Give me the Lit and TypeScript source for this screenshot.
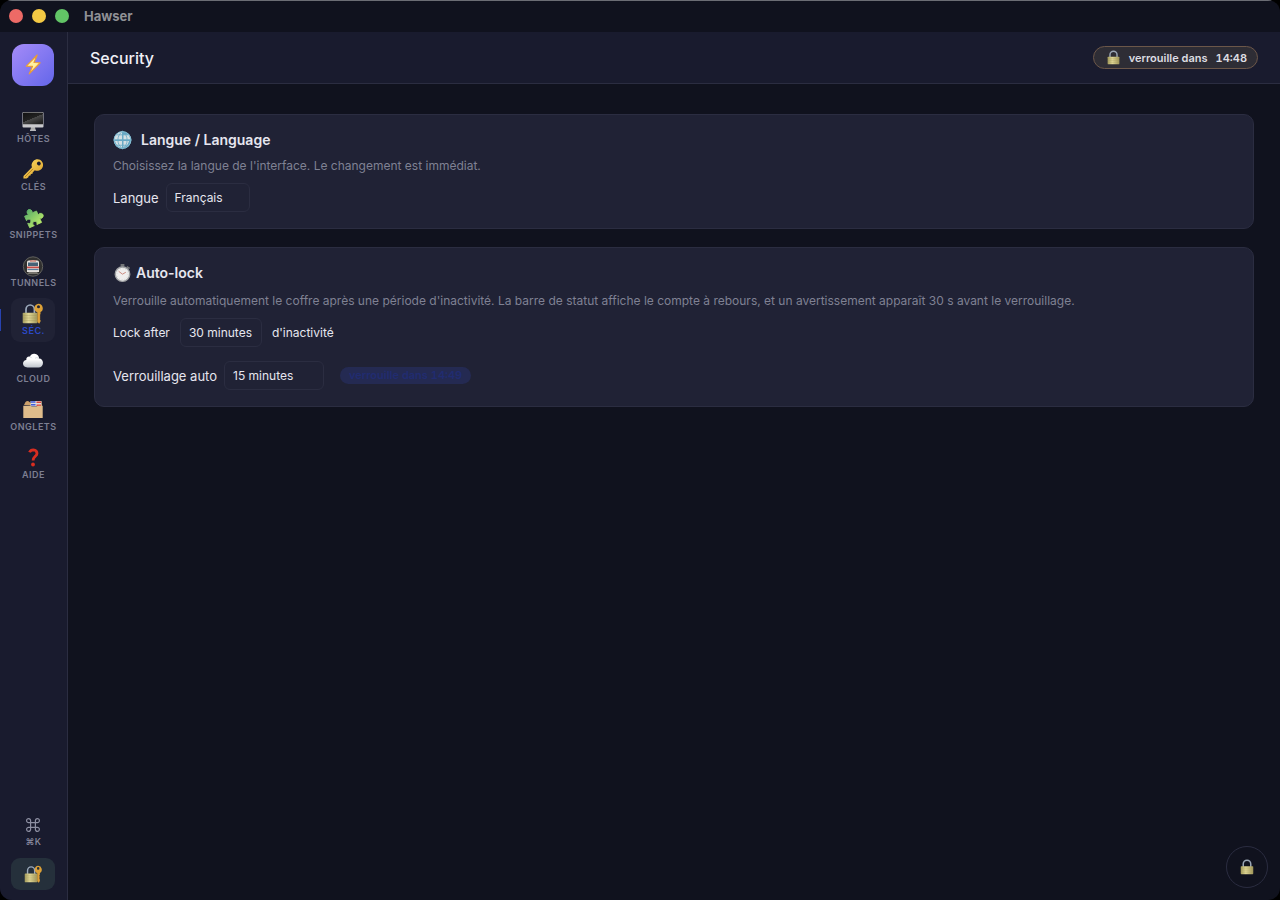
import { LitElement, html, svg, css, type TemplateResult } from "lit";
import { customElement, property } from "lit/decorators.js";

const brass = svg`<defs><linearGradient id="brass">
  <stop offset="0" stop-color="#a49c5c"/><stop offset=".4" stop-color="#e0d795"/><stop offset="1" stop-color="#a0965a"/>
</linearGradient></defs>`;

const art: Record<string, TemplateResult> = {
  bolt: svg`<path d="M13.500 0 3.100 10.600l6 .2L5.900 18 16.300 7.400l-5.800-.3z" fill="#fff0a0" stroke="#e99b35" stroke-width="1.1" stroke-linejoin="round"/>`,
  hosts: svg`
    <defs><linearGradient id="scr" x2=".7" y2="1"><stop offset="0" stop-color="#111"/><stop offset=".55" stop-color="#222"/><stop offset=".56" stop-color="#4a4a4a"/><stop offset="1" stop-color="#222"/></linearGradient></defs>
    <path d="M8 15h4l.6 3H7.400z" fill="#aaa"/><rect x="-.5" y="0" width="21" height="15.600" rx="1" fill="#c9c9cc"/>
    <rect x="0" y=".5" width="20" height="11.800" rx=".4" fill="url(#scr)"/><path d="M7 18.300h6" stroke="#ddd"/>`,
  key: svg`
    <defs><linearGradient id="gold" x2="1" y2="1"><stop offset="0" stop-color="#ffe06a"/><stop offset="1" stop-color="#d79a23"/></linearGradient></defs>
    <path fill-rule="evenodd" fill="url(#gold)" d="M10.200 1.200C13-1.800 17-1.200 18.900 1.400s1.500 6-1 8c-1.800 1.500-4.300 1.700-6.100.8L9.700 12.400l-.2 1.400-1.600.1-.4 1.700-1.700.1-.4 1.600-1.800 1.200-3.200.1L.5 16l8.500-8.700c-.9-2-.4-4.400 1.200-6.100zM17.300 2.300a1.900 1.900 0 1 0-2.900 2.500 1.900 1.900 0 0 0 2.900-2.500z"/>
    <path d="m2 17 8-8.200" stroke="#a66d17" stroke-width=".8"/>`,
  puzzle: svg`
    <defs><linearGradient id="pz" x1=".3" x2=".7" y2="1"><stop offset="0" stop-color="#5dae68"/><stop offset="1" stop-color="#b5e86a"/></linearGradient></defs>
    <path transform="rotate(-24 10 10)" fill="url(#pz)" stroke="url(#pz)" stroke-width=".8" stroke-linejoin="round"
      d="M3 5H7.700A2.500 2.500 0 1 1 10.900 5H16V9.500A2.500 2.500 0 1 1 16 12.700V17.500H10.900A2.200 2.200 0 1 0 8.100 17.500H3V12.700A2.200 2.200 0 1 0 3 9.900z"/>`,
  metro: svg`
    <circle cx="10" cy="10.500" r="9.700" fill="#30302f" stroke="#60605d" stroke-width="1"/>
    <path d="M4 16V5.500Q5 4 10 4t6 1.500V16z" fill="#e4e0dc"/><path d="M5 6.500h10v3.500H5z" fill="#456277"/>
    <path d="M7 5h6" stroke="#b54" stroke-width="1"/><path d="M4 11.400h12" stroke="#c44b46" stroke-width="1.700"/>
    <path d="M4.500 13.500h11" stroke="#547b9b" stroke-width="1.200"/><path d="m4 18 2-2h8l2 2z" fill="#77756e"/>`,
  lockkey: svg`${brass}
    <path d="M3 9.500V5.500a4.200 4.500 0 0 1 8.400 0v4" fill="none" stroke="#9ba9bb" stroke-width="1.700"/>
    <rect x="-.3" y="8.700" width="14.800" height="10.500" rx=".8" fill="url(#brass)"/><path d="M0 11.500h14.500M0 14h14.500M0 16.500h14.500" stroke="#9c9155" stroke-width=".5" opacity=".6"/>
    <path fill-rule="evenodd" d="M15.500-.3a4.500 4.500 0 0 1 2 8.400v2.100l-.8.800.8 1-.8 1 .8 1-.8 1 .8 1v1.500L16.200 19.700l-1.800-1.700V8.400A4.500 4.500 0 0 1 15.500-.3zm0 1.600a1.500 1.500 0 1 0 0 3 1.500 1.500 0 0 0 0-3z" fill="#dda137"/>`,
  lock: svg`${brass}
    <path d="M5.300 10V6.300a4.700 4.700 0 0 1 9.400 0V10" fill="none" stroke="#9aa6b5" stroke-width="1.900"/>
    <rect x="2.200" y="9" width="15.600" height="10" rx=".8" fill="url(#brass)"/>
    <path d="M2.200 11.500h15.600M2.200 14h15.600M2.200 16.500h15.600" stroke="#9c9155" stroke-width=".5" opacity=".6"/>`,
  cloud: svg`
    <defs><linearGradient id="cl" x2="0" y2="1"><stop offset=".4" stop-color="#fff"/><stop offset="1" stop-color="#bfc5cd"/></linearGradient></defs>
    <path fill="url(#cl)" d="M4.500 15.500C1.500 15.500 0 13.700 0 11.600 0 9.500 1.600 8.100 3.300 8c-.3-2.200 1.500-3.800 3.500-3.300C7.700 2.700 9.300 1.500 11.500 1.700c2.800.2 4.600 2.300 4.600 4.700 2.200 0 3.900 1.900 3.900 4.400 0 2.900-2 4.700-4.500 4.700z"/><path d="M6.800 4.700q1.400.2 2 1.500m3.200.1q1.500-1.500 4.100.1" fill="none" stroke="#d3d9e0" stroke-width=".8"/>`,
  tabs: svg`
    <path d="M1 5 2.500 2q2-2 4 0L8 3.500 18.500 1l.5 5z" fill="#cda06b"/><path d="M7.500 1h10.800v5.500H7.500z" fill="#ddd"/>
    <path d="M8 2h4.500M8 4.800h4.500" stroke="#425bdb" stroke-width="1.500"/><path d="M13.500 2.200h4.500m-4.500 3h4.500" stroke="#dc443b" stroke-width="1.500"/>
    <path d="M.3 5.800h7.400l1 1h5l1-1h5V18H.3z" fill="#dfbc8b"/>`,
  question: svg`<path d="M6.500 4.300Q7.600 1.800 10.300 1.800q3.700.2 3.700 3.600c0 2.800-3.900 3.100-3.900 7" fill="none" stroke="#d92d20" stroke-width="2.800"/><circle cx="10" cy="16.500" r="1.900" fill="#d92d20"/>`,
  command: svg`<path d="M7 7h6v6H7zM7 7H4.700A2.500 2.500 0 1 1 7 4.700zm6 0V4.700A2.500 2.500 0 1 1 15.300 7zm0 6h2.300a2.500 2.500 0 1 1-2.300 2.300zm-6 0v2.300A2.500 2.500 0 1 1 4.700 13z" fill="none" stroke="currentColor" stroke-width="1.500"/>`,
  globe: svg`
    <circle cx="10" cy="9.500" r="9.300" fill="#62a5c2"/>
    <path d="M2.500 5Q5 1 9.500.5V9H1zM2 10.500h7.500V18Q4 17 2 10.500zM11 4h5.500l2 5H11zm0 6.500h6L15 15l-4 2.500z" fill="#d3dfe3"/>
    <path d="M10 .2v18.600M.7 9.500h18.600M3 4h14M3 15h14M10 .2C3.500 5 3.500 14 10 18.800M10 .2c6.500 4.800 6.500 13.800 0 18.600" fill="none" stroke="#6aaac6" stroke-width=".9"/>
    <circle cx="10" cy="9.500" r="8.900" fill="none" stroke="#8cc4d8" stroke-width=".9"/>`,
  timer: svg`
    <path d="M8 0h4v3H8zm7 2 3 2-1 1.500-3-2z" fill="#727477"/><circle cx="10" cy="10.700" r="7.600" fill="#efeeed" stroke="#a1a3a5" stroke-width="1.500"/>
    <circle cx="10" cy="10.700" r="5.800" fill="none" stroke="#bbb" stroke-width=".8" stroke-dasharray=".6 2.400"/><path d="m6 7.700 4 3 3.500-2" fill="none" stroke="#c4796d" stroke-width=".9"/>`,
};

@customElement("app-icon")
export class AppIcon extends LitElement {
  @property() name = "";
  @property({ type: Number }) size = 20;
  static styles = css`:host { display: inline-flex; flex: none; } svg { display: block; overflow: visible; }`;
  render() {
    return html`<svg viewBox="0 0 20 20" width=${this.size} height=${this.size} aria-hidden="true">${art[this.name]}</svg>`;
  }
}

const nav = [
  ["hosts", "HÔTES"], ["key", "CLÉS"], ["puzzle", "SNIPPETS"], ["metro", "TUNNELS"],
  ["lockkey", "SÉC."], ["cloud", "CLOUD"], ["tabs", "ONGLETS"], ["question", "AIDE"],
];

@customElement("app-root")
export class AppRoot extends LitElement {
  static styles = css`
    :host { display: block; min-height: 100vh; background: #000; color: #e6e6ef; font: 13px/20px Inter, "Noto Sans", sans-serif; }
    * { box-sizing: border-box; }
    button, select { font: inherit; color: inherit; margin: 0; }
    button { border: 0; background: none; padding: 0; cursor: pointer; }
    h1, h2, p { margin: 0; }
    .window { min-height: 100vh; display: flex; flex-direction: column; background: #10121e; border-radius: 12px; overflow: hidden; }
    .titlebar { height: 32px; display: flex; align-items: center; gap: 9px; padding: 0 9px 1px; border-top: 1px solid #6b6d74; }
    .dot { width: 14px; height: 14px; border-radius: 50%; }
    .red { background: #ed6a66; } .yellow { background: #f4c944; } .green { background: #62c466; }
    .app-name { margin-left: 6px; font-weight: 700; color: #8f9095; }
    .body { flex: 1; display: flex; }
    .sidebar { width: 68px; flex: none; display: flex; flex-direction: column; align-items: center; padding: 12px 0 10px; background: #191b2e; border-right: 1px solid #2b2d41; }
    .sidebar { padding-right: 1px; }
    .logo { width: 42px; height: 42px; display: grid; place-items: center; border-radius: 12px; background: linear-gradient(135deg, #a58bf8, #6366ea); }
    .nav { width: 100%; display: flex; flex-direction: column; align-items: center; gap: 4px; margin-top: 20px; flex: 1; }
    .item { width: 44px; height: 44px; display: flex; flex-direction: column; align-items: center; justify-content: center; gap: 1px; border-radius: 9px; color: #7d7f92; position: relative; }
    .item span { padding-left: 1px; font-size: 9px; line-height: 12px; letter-spacing: 0.5px; font-weight: 600; white-space: nowrap; }
    .item.active { background: #202235; color: #2b49c8; }
    .item.active::before { content: ""; position: absolute; left: -11px; top: 11px; width: 1px; height: 22px; background: #2742b0; }
    .item.shortcut { color: #8d8fa2; gap: 3px; }
    .item.shortcut span { font-weight: 500; }
    .vault { width: 44px; height: 32px; display: grid; place-items: center; border-radius: 9px; background: #25303b; margin-top: 4px; }
    .main { flex: 1; min-width: 0; display: flex; flex-direction: column; }
    .header { height: 52px; display: flex; align-items: center; justify-content: space-between; padding: 0 22px; background: #191b2e; border-bottom: 1px solid #2b2d41; }
    h1 { font-size: 16px; font-weight: 500; color: #f0f0f6; }
    .countdown { height: 23px; display: flex; align-items: center; gap: 8px; padding: 0 10px 0 12px; border: 1px solid #6c5749; border-radius: 12px; background: #2e2d35; font-size: 11px; font-weight: 600; font-variant-numeric: tabular-nums; color: #dddde2; }
    .content { padding: 30px 26px; display: flex; flex-direction: column; gap: 18px; }
    .card { padding: 15px 18px 16px; border: 1px solid #2b2d41; border-radius: 10px; background: #202235; }
    h2 { display: flex; align-items: center; gap: 9px; font-size: 14px; font-weight: 600; }
    h2.tight { gap: 4px; }
    .hint { font-size: 12px; line-height: 18px; color: #7f8193; margin-top: 7px; }
    .tight + .hint { margin-top: 9px; }
    .row { display: flex; align-items: center; gap: 7px; margin-top: 8px; }
    .row.wide { gap: 10px; font-size: 12px; }
    .row + .row { margin-top: 14px; }
    select { appearance: none; height: 29px; padding: 0 8px; border: 1px solid #2b2d41; border-radius: 6px; background: #202235; font-size: 12px; }
    .lang { width: 84px; } .after { width: 82px; } .auto { width: 100px; }
    .left { margin-left: 9px; padding: 0 9px; border-radius: 9px; background: #242a52; color: #212c70; font-size: 11px; line-height: 17px; font-weight: 600; font-variant-numeric: tabular-nums; }
    .fab { position: fixed; right: 12px; bottom: 12px; width: 42px; height: 42px; display: grid; place-items: center; border: 1px solid #2b2d41; border-radius: 50%; }
  `;

  render() {
    return html`
      <div class="window">
        <div class="titlebar">
          <i class="dot red"></i><i class="dot yellow"></i><i class="dot green"></i>
          <span class="app-name">Hawser</span>
        </div>
        <div class="body">
          <aside class="sidebar">
            <div class="logo"><app-icon name="bolt" size="21"></app-icon></div>
            <nav class="nav">
              ${nav.map(([icon, label]) => html`
                <button class="item ${icon === "lockkey" ? "active" : ""}">
                  <app-icon name=${icon}></app-icon><span>${label}</span>
                </button>`)}
            </nav>
            <button class="item shortcut"><app-icon name="command" size="16"></app-icon><span>⌘K</span></button>
            <button class="vault" aria-label="Verrouiller"><app-icon name="lockkey" size="17"></app-icon></button>
          </aside>
          <main class="main">
            <header class="header">
              <h1>Security</h1>
              <div class="countdown"><app-icon name="lock" size="15"></app-icon><span>verrouille dans</span><span>14:48</span></div>
            </header>
            <div class="content">
              <section class="card">
                <h2><app-icon name="globe" size="19"></app-icon>Langue / Language</h2>
                <p class="hint">Choisissez la langue de l'interface. Le changement est immédiat.</p>
                <div class="row">
                  <label for="lang">Langue</label>
                  <select id="lang" class="lang"><option>Français</option></select>
                </div>
              </section>
              <section class="card">
                <h2 class="tight"><app-icon name="timer" size="19"></app-icon>Auto-lock</h2>
                <p class="hint">Verrouille automatiquement le coffre après une période d'inactivité. La barre de statut affiche le compte à rebours, et un avertissement apparaît 30 s avant le verrouillage.</p>
                <div class="row wide">
                  <label for="after">Lock after</label>
                  <select id="after" class="after"><option>30 minutes</option></select>
                  <span>d'inactivité</span>
                </div>
                <div class="row">
                  <label for="auto">Verrouillage auto</label>
                  <select id="auto" class="auto"><option>15 minutes</option></select>
                  <span class="left">verrouille dans 14:49</span>
                </div>
              </section>
            </div>
          </main>
        </div>
        <button class="fab" aria-label="Verrouiller"><app-icon name="lock" size="16"></app-icon></button>
      </div>`;
  }
}
